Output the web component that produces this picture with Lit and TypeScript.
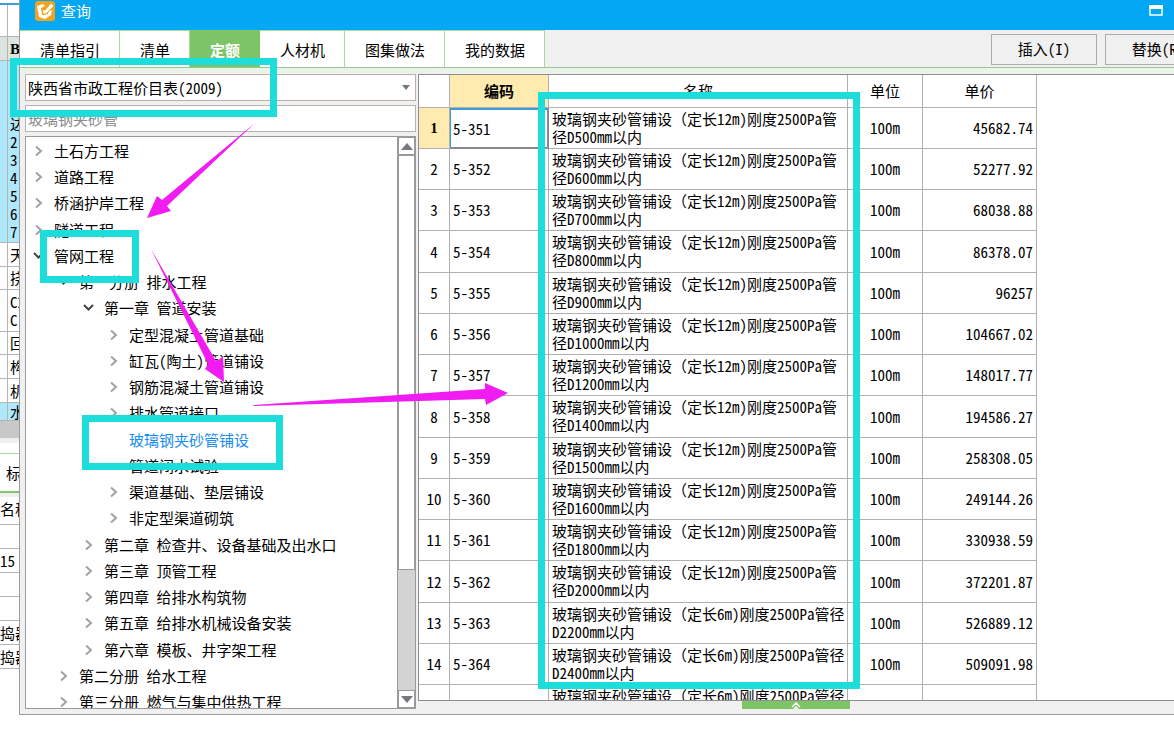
import { LitElement, html, css, svg, nothing } from "lit";
import { customElement, state } from "lit/decorators.js";
import { classMap } from "lit/directives/class-map.js";

interface TreeItem {
  level: number;
  label: string;
  kind: "closed" | "open" | "leaf";
}

const TREE: TreeItem[] = [
  { level: 0, label: "土石方工程", kind: "closed" },
  { level: 0, label: "道路工程", kind: "closed" },
  { level: 0, label: "桥涵护岸工程", kind: "closed" },
  { level: 0, label: "隧道工程", kind: "closed" },
  { level: 0, label: "管网工程", kind: "open" },
  { level: 1, label: "第一分册 排水工程", kind: "open" },
  { level: 2, label: "第一章 管道安装", kind: "open" },
  { level: 3, label: "定型混凝土管道基础", kind: "closed" },
  { level: 3, label: "缸瓦(陶土)管道铺设", kind: "closed" },
  { level: 3, label: "钢筋混凝土管道铺设", kind: "closed" },
  { level: 3, label: "排水管道接口", kind: "closed" },
  { level: 3, label: "玻璃钢夹砂管铺设", kind: "leaf" },
  { level: 3, label: "管道闭水试验", kind: "leaf" },
  { level: 3, label: "渠道基础、垫层铺设", kind: "closed" },
  { level: 3, label: "非定型渠道砌筑", kind: "closed" },
  { level: 2, label: "第二章 检查井、设备基础及出水口", kind: "closed" },
  { level: 2, label: "第三章 顶管工程", kind: "closed" },
  { level: 2, label: "第四章 给排水构筑物", kind: "closed" },
  { level: 2, label: "第五章 给排水机械设备安装", kind: "closed" },
  { level: 2, label: "第六章 模板、井字架工程", kind: "closed" },
  { level: 1, label: "第二分册 给水工程", kind: "closed" },
  { level: 1, label: "第三分册 燃气与集中供热工程", kind: "closed" },
];

interface Item {
  no: string;
  code: string;
  length: string;
  tail: string;
  unit: string;
  price: string;
}

const item = (no: number, length: number, diameter: number, price: string): Item => ({
  no: String(no),
  code: `5-${350 + no}`,
  length: `${length}m`,
  tail: `D${diameter}mm以内`,
  unit: "100m",
  price,
});

const ITEMS: Item[] = [
  item(1, 12, 500, "45682.74"),
  item(2, 12, 600, "52277.92"),
  item(3, 12, 700, "68038.88"),
  item(4, 12, 800, "86378.07"),
  item(5, 12, 900, "96257"),
  item(6, 12, 1000, "104667.02"),
  item(7, 12, 1200, "148017.77"),
  item(8, 12, 1400, "194586.27"),
  item(9, 12, 1500, "258308.05"),
  item(10, 12, 1600, "249144.26"),
  item(11, 12, 1800, "330938.59"),
  item(12, 12, 2000, "372201.87"),
  item(13, 6, 2200, "526889.12"),
  item(14, 6, 2400, "509091.98"),
  { no: "", code: "", length: "6m", tail: "", unit: "", price: "" },
];

const TABS = ["清单指引", "清单", "定额", "人材机", "图集做法", "我的数据"];

const base = css`
  :host {
    font-family: "Noto Sans CJK SC", sans-serif;
    font-feature-settings: "hwid";
    font-size: 15px;
    line-height: 18px;
    color: #000;
  }
  *,
  *::before {
    box-sizing: border-box;
  }
  button,
  input,
  select {
    font: inherit;
    font-feature-settings: inherit;
    color: inherit;
    margin: 0;
    border-radius: 0;
    outline: none;
  }
`;

/* Slice of the main window that stays visible beside the dialog. */
@customElement("back-window")
export class BackWindow extends LitElement {
  static styles = [
    base,
    css`
      :host {
        display: block;
        overflow: hidden;
        white-space: nowrap;
      }
      .grid {
        display: grid;
        grid-template-columns: 8px 40px;
        grid-template-rows: 5px 32px 24px 182px 24px 23px 42px 23px 24px 24px 18px;
      }
      .cell {
        border-right: 1px solid #b4b4b4;
        border-bottom: 1px solid #b4b4b4;
        padding-left: 2px;
        display: flex;
        flex-direction: column;
        justify-content: center;
        overflow: hidden;
      }
      .rule {
        border-right: 0;
        border-bottom: 2px solid #3aa0da;
      }
      .head {
        background: #dce4e0;
        font-family: "Liberation Serif", serif;
        font-weight: bold;
      }
      .blue {
        background: #aee8fa;
      }
      .end {
        justify-content: flex-end;
        padding-bottom: 1px;
      }
      .band {
        height: 17px;
        background: #c8c8c8;
      }
      .strip {
        height: 16px;
        background: linear-gradient(#efefef 5px, #fff 5px);
        border-bottom: 1px solid #a5dc97;
      }
      .title {
        height: 39px;
        padding: 10px 0 0 6px;
        border-bottom: 2px solid #84c46c;
      }
      .name {
        padding-top: 7px;
        height: 32px;
        background: linear-gradient(#eee 4px, #fff 4px);
        border-bottom: 1px solid #b4b4b4;
      }
      .row {
        height: 24px;
        padding-top: 3px;
        border-bottom: 1px solid #b4b4b4;
      }
    `,
  ];

  render() {
    const rows: [string, string[]][] = [
      ["rule", []],
      ["", []],
      ["head", ["B"]],
      ["blue end", ["达", "2", "3", "4", "5", "6", "7"]],
      ["", ["天"]],
      ["", ["挠"]],
      ["", ["C2", "C"]],
      ["", ["回"]],
      ["", ["构"]],
      ["", ["机"]],
      ["blue", ["水"]],
    ];
    return html`
      <div class="grid">
        ${rows.map(
          ([cls, lines]) => html`
            <div class="cell ${cls}"></div>
            <div class="cell ${cls}">${lines.map((l) => html`<span>${l}</span>`)}</div>
          `,
        )}
      </div>
      <div class="band"></div>
      <div class="strip"></div>
      <div class="title">标</div>
      <div class="name">名称</div>
      ${["", "15", "", "", "捣器", "捣器"].map((t) => html`<div class="row">${t}</div>`)}
    `;
  }
}

@customElement("quota-tree")
export class QuotaTree extends LitElement {
  @state() private selected = 11;

  static styles = [
    base,
    css`
      :host {
        display: flex;
        flex: 1;
        min-height: 0;
        background: #fff;
        border: 1px solid #9a9a9e;
      }
      .list {
        flex: 1;
        min-width: 0;
        margin: 0;
        padding: 1px 0 0 7px;
        list-style: none;
        overflow: hidden;
      }
      .item {
        display: flex;
        align-items: center;
        height: 26px;
        white-space: nowrap;
      }
      .item:nth-child(4n) {
        height: 27px;
      }
      .item.l1 {
        padding-left: 25px;
      }
      .item.l2 {
        padding-left: 50px;
      }
      .item.l3 {
        padding-left: 75px;
      }
      .mark {
        width: 12px;
        height: 12px;
        margin-right: 9px;
        fill: none;
        stroke: #a2a2a2;
        stroke-width: 2;
      }
      .mark.open {
        stroke: #444;
      }
      .node {
        border: 0;
        padding: 0;
        background: none;
      }
      .node.on {
        color: #1a8cf0;
      }
      .bar {
        width: 18px;
        display: flex;
        flex-direction: column;
        background: #d3d3d3;
        border-left: 1px solid #9a9a9e;
      }
      .step {
        height: 18px;
        padding: 0;
        border: 1px solid #9a9a9e;
        background: #fff;
        display: grid;
        place-items: center;
      }
      .thumb {
        flex: 415;
        background: #fff;
        border: 1px solid #9a9a9e;
      }
      .rest {
        flex: 121;
      }
    `,
  ];

  render() {
    return html`
      <ul class="list" role="tree" aria-label="定额章节">
        ${TREE.map(
          (t, i) => html`
            <li class="item l${t.level}" role="treeitem">
              <svg class="mark ${t.kind}" viewBox="0 0 12 12" aria-hidden="true">
                ${t.kind === "closed"
                  ? svg`<path d="M3 1.5 L8 6 L3 10.5" />`
                  : t.kind === "open"
                    ? svg`<path d="M1 3 L5.500 7.500 L10 3" />`
                    : nothing}
              </svg>
              <button
                class=${classMap({ node: true, on: i === this.selected })}
                @click=${() => (this.selected = i)}
              >
                ${t.label}
              </button>
            </li>
          `,
        )}
      </ul>
      <div class="bar">
        <button class="step" aria-label="向上滚动">
          <svg width="12" height="7" viewBox="0 0 12 7"><path d="M6 0 L12 7 H0 Z" fill="#77777c" /></svg>
        </button>
        <div class="thumb"></div>
        <div class="rest"></div>
        <button class="step" aria-label="向下滚动">
          <svg width="12" height="7" viewBox="0 0 12 7"><path d="M0 0 H12 L6 7 Z" fill="#77777c" /></svg>
        </button>
      </div>
    `;
  }
}

@customElement("price-table")
export class PriceTable extends LitElement {
  static styles = [
    base,
    css`
      :host {
        display: block;
        flex: 1;
        min-height: 0;
        overflow: hidden;
        background: #fff;
        border: 1px solid #8e8e92;
        border-right: 0;
      }
      .grid {
        table-layout: fixed;
        width: 618px;
        border-collapse: separate;
        border-spacing: 0;
      }
      .num {
        width: 31px;
      }
      .code {
        width: 99px;
      }
      .name {
        width: 299px;
      }
      .unit {
        width: 75px;
      }
      .price {
        width: 114px;
      }
      th,
      td {
        padding: 0 3px;
        border-right: 1px solid #b0b0b0;
        border-bottom: 1px solid #b0b0b0;
        font-weight: normal;
        text-align: left;
        vertical-align: middle;
      }
      thead th {
        height: 33px;
        text-align: center;
      }
      tbody tr {
        height: 41px;
      }
      tbody tr:nth-child(4n) {
        height: 42px;
      }
      tbody th,
      .mid {
        text-align: center;
      }
      .wrap {
        padding: 2px 0 0 3px;
        word-break: break-all;
        vertical-align: top;
      }
      .full {
        font-feature-settings: normal;
      }
      .right {
        text-align: right;
      }
      .hot {
        background: #ffebb0;
        font-weight: bold;
      }
      .serif {
        font-family: "Liberation Serif", serif;
      }
      .current {
        border: 2px solid #8a8a8e;
        border-top-color: #3f9bd8;
        border-left: 1px solid #3f9bd8;
        padding-left: 2px;
      }
    `,
  ];

  render() {
    return html`
      <table class="grid">
        <colgroup>
          <col class="num" />
          <col class="code" />
          <col class="name" />
          <col class="unit" />
          <col class="price" />
        </colgroup>
        <thead>
          <tr>
            <th></th>
            <th class="hot">编码</th>
            <th>名称</th>
            <th>单位</th>
            <th>单价</th>
          </tr>
        </thead>
        <tbody>
          ${ITEMS.map(
            (it, i) => html`
              <tr>
                <th class=${classMap({ hot: i === 0, serif: i === 0 })}>${it.no}</th>
                <td class=${classMap({ current: i === 0 })}>${it.code}</td>
                <td class="wrap">玻璃钢夹砂管铺设<span class="full">（</span>定长${it.length})刚度2500Pa管径${it.tail}</td>
                <td class="mid">${it.unit}</td>
                <td class="right">${it.price}</td>
              </tr>
            `,
          )}
        </tbody>
      </table>
    `;
  }
}

@customElement("app-root")
export class AppRoot extends LitElement {
  @state() private tab = 2;

  static styles = [
    base,
    css`
      :host {
        display: block;
        position: relative;
        height: 100vh;
        overflow: hidden;
        background: #fff;
      }
      .desk {
        display: grid;
        grid-template-columns: 19px minmax(0, 1fr);
        height: 100%;
        padding-bottom: 31px;
      }
      .dialog {
        display: flex;
        flex-direction: column;
        min-height: 0;
        overflow: hidden;
        background: #f0f0f0;
        border-left: 1px solid #9c9c9c;
        border-bottom: 1px solid #9c9c9c;
      }
      .titlebar {
        display: flex;
        align-items: center;
        gap: 6px;
        height: 30px;
        padding: 0 11px 9px 15px;
        background: #02a8f3;
        color: #fff;
      }
      .caption {
        flex: 1;
      }
      .max {
        padding: 0;
        border: 0;
        background: none;
        display: flex;
      }
      .tools {
        display: flex;
        align-items: center;
        height: 38px;
        border-bottom: 1px solid #9cc79a;
      }
      .tabs {
        display: flex;
        align-self: stretch;
      }
      .tab {
        padding: 2px 19px 0 20px;
        border: 0;
        border-top: 1px solid #a5dc97;
        border-right: 1px solid #a5dc97;
        background: #fff;
      }
      .tab.on {
        background: #7dc467;
        border-color: #7dc467;
        color: #fff;
        font-weight: bold;
      }
      .actions {
        display: flex;
        gap: 8px;
        margin: 1px -37px 0 auto;
      }
      .act {
        width: 106px;
        height: 31px;
        padding: 0;
        border: 1px solid #adadad;
        background: #f0f0f0;
      }
      .body {
        flex: 1;
        min-height: 0;
        display: grid;
        grid-template-columns: 391px minmax(0, 1fr);
        gap: 2px;
        padding: 6px 0 0 5px;
        background: linear-gradient(#eaf3e8 5px, #f0f0f0 5px);
      }
      .side {
        display: flex;
        flex-direction: column;
        gap: 4px;
        min-height: 0;
        padding-bottom: 5px;
      }
      .combo {
        display: grid;
        align-items: center;
      }
      .combo > * {
        grid-area: 1 / 1;
      }
      .pick,
      .find {
        width: 100%;
        height: 27px;
        padding: 0 2px;
        border: 1px solid #b4b4b4;
        background: #fff;
        appearance: none;
      }
      .pick {
        border-color: #c4aca8;
      }
      .find::placeholder {
        color: #8c8c8c;
        opacity: 1;
      }
      .drop {
        justify-self: end;
        margin-right: 6px;
        pointer-events: none;
      }
      .main {
        display: flex;
        flex-direction: column;
        min-height: 0;
      }
      .foot {
        height: 13px;
        display: flex;
        justify-content: center;
        align-items: flex-start;
      }
      .more {
        width: 108px;
        height: 8px;
        padding: 0;
        border: 0;
        background: #7dc467;
        display: flex;
        justify-content: center;
      }
      /* Hand-drawn marks lie over the whole screen. */
      .notes {
        position: absolute;
        top: 0;
        left: 0;
        pointer-events: none;
      }
      .box {
        fill: none;
        stroke: #1cdcdc;
        stroke-width: 7;
      }
      .arrow {
        fill: #f11cf1;
      }
    `,
  ];

  render() {
    return html`
      <div class="desk">
        <back-window></back-window>
        <section class="dialog" role="dialog" aria-label="查询">
          <header class="titlebar">
            <svg width="20" height="20" viewBox="0 0 20 20" aria-hidden="true">
              <rect width="20" height="20" rx="3" fill="#f5a21c" />
              <path d="M2 5 L8 3 L10 5 L6 7 L7 14 L13 13 L14 10 L17 9 L16 14 L10 18 L4 16 Z" fill="#fff" />
              <path d="M7 9 L10 9 L16 2 L19 5 L11 13 L8 13 Z" fill="#fff" stroke="#f5a21c" stroke-width="1" />
            </svg>
            <span class="caption">查询</span>
            <button class="max" aria-label="最大化">
              <svg width="14" height="11" viewBox="0 0 14 11">
                <path d="M1 1 H13 V10 H1 Z" fill="none" stroke="#fff" stroke-width="1.500" />
                <path d="M0 0 H14 V4 H0 Z" fill="#fff" />
              </svg>
            </button>
          </header>
          <div class="tools">
            <nav class="tabs" role="tablist">
              ${TABS.map(
                (t, i) => html`
                  <button
                    role="tab"
                    class=${classMap({ tab: true, on: i === this.tab })}
                    @click=${() => (this.tab = i)}
                  >
                    ${t}
                  </button>
                `,
              )}
            </nav>
            <div class="actions">
              <button class="act">插入(I)</button>
              <button class="act">替换(R)</button>
            </div>
          </div>
          <div class="body">
            <div class="side">
              <div class="combo">
                <select class="pick" aria-label="定额库">
                  <option>陕西省市政工程价目表(2009)</option>
                </select>
                <svg class="drop" width="8" height="5" viewBox="0 0 8 5"><path d="M0 0 H8 L4 5 Z" fill="#777" /></svg>
              </div>
              <input class="find" type="text" aria-label="搜索" placeholder="玻璃钢夹砂管" />
              <quota-tree></quota-tree>
            </div>
            <div class="main">
              <price-table></price-table>
              <div class="foot">
                <button class="more" aria-label="展开">
                  <svg width="10" height="8" viewBox="0 0 10 8">
                    <path d="M1 6 L5 2 L9 6 M3 8 L5 6 L7 8" fill="none" stroke="#fff" stroke-width="1.500" />
                  </svg>
                </button>
              </div>
            </div>
          </div>
        </section>
      </div>
      <svg class="notes" width="1174" height="746" viewBox="0 0 1174 746" aria-hidden="true">
        <rect class="box" x="13.500" y="61.500" width="260" height="52" />
        <rect class="box" x="43.500" y="233.500" width="92" height="46" />
        <rect class="box" x="85.500" y="418.500" width="194" height="48" />
        <rect class="box" x="541.500" y="95.500" width="315" height="590" />
        <path class="arrow" d="M255 123 L167 206 L171 211 L147 218 L157 196 L162 200 Z" />
        <path class="arrow" d="M151 249 L216 361 L223 357 L224 382 L205 369 L208 364 Z" />
        <path class="arrow" d="M253 405 L485 389 L485 383 L508 393 L486 405 L485 399 L254 406 Z" />
      </svg>
    `;
  }
}
